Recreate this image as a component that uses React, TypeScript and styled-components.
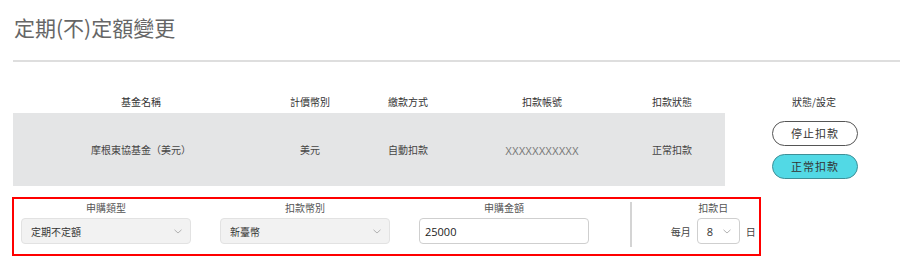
import * as React from 'react';
import styled, { createGlobalStyle } from 'styled-components';

const GlobalStyle = createGlobalStyle`
  body {
    margin: 0;
    background: #fff;
    font-family: "Noto Sans CJK TC", "Noto Sans", sans-serif;
  }
`;

const Page = styled.div`
  width: 887px;
  padding: 12px 11px 0 13px;
`;

const Title = styled.h1`
  margin: 0 0 0 1px;
  font-size: 21px;
  line-height: 30px;
  font-weight: 400;
  color: #666;
`;

const Rule = styled.hr`
  margin: 18px 0 0;
  border: 0;
  height: 2px;
  background: #dedede;
`;

const Table = styled.div`
  display: grid;
  grid-template-columns: 256px 82px 114px 154px 106px 178px;
  margin-top: 28px;
`;

const HeadCell = styled.div`
  height: 23px;
  display: flex;
  align-items: center;
  justify-content: center;
  font-size: 10px;
  color: #333;
`;

const Cell = styled.div<{ $mono?: boolean }>`
  box-sizing: border-box;
  height: 73px;
  display: flex;
  align-items: center;
  justify-content: center;
  background: #e4e5e6;
  font-size: 10px;
  color: ${(p) => (p.$mono ? '#777' : '#444')};
  font-family: ${(p) =>
    p.$mono ? '"Liberation Sans", sans-serif' : '"Noto Sans CJK TC", sans-serif'};
  padding-top: ${(p) => (p.$mono ? '4px' : '0')};
`;

const ActionCell = styled.div`
  height: 73px;
  display: flex;
  flex-direction: column;
  align-items: center;
  justify-content: center;
  gap: 8px;
  padding-left: 2px;
`;

const PillButton = styled.button<{ $active?: boolean }>`
  width: 86px;
  height: 25px;
  border-radius: 13px;
  border: 1.5px solid ${(p) => (p.$active ? '#3f8f97' : '#555')};
  background: ${(p) => (p.$active ? '#52d9e5' : '#fff')};
  color: #333;
  font-family: "Noto Sans CJK TC", sans-serif;
  font-size: 11px;
  letter-spacing: 1px;
  padding: 0;
`;

const FormBox = styled.div`
  display: flex;
  width: 738px;
  margin: 11px 0 0 -1px;
  border: 2px solid #ff0000;
  padding: 2px 0 10px 7px;
`;

const Field = styled.div`
  display: flex;
  flex-direction: column;
  align-items: center;
  width: 170px;
  gap: 3px;
  & + & {
    margin-left: 29px;
  }
`;

const Label = styled.div`
  font-size: 10px;
  line-height: 14px;
  color: #555;
`;

const SelectBox = styled.div<{ $plain?: boolean; $w?: number }>`
  box-sizing: border-box;
  width: ${(p) => (p.$w ? `${p.$w}px` : '100%')};
  height: 26px;
  display: flex;
  align-items: center;
  justify-content: space-between;
  padding: 0 8px 0 9px;
  border: 1px solid ${(p) => (p.$plain ? '#cfcfcf' : '#e2e2e2')};
  border-radius: 4px;
  background: ${(p) => (p.$plain ? '#fff' : '#f2f2f2')};
  font-size: 10px;
  color: #333;
`;

const InputBox = styled.div`
  box-sizing: border-box;
  width: 100%;
  height: 26px;
  display: flex;
  align-items: center;
  padding: 0 5px;
  border: 1.5px solid #cfcfcf;
  border-radius: 4px;
  font-family: "Open Sans", sans-serif;
  font-size: 11px;
  color: #222;
`;

const Divider = styled.div`
  width: 1.5px;
  margin: 1px 0 -3px 41px;
  background: #d4d4d4;
`;

const DayField = styled.div`
  flex: 1;
  display: flex;
  flex-direction: column;
  align-items: center;
  gap: 3px;
  padding-left: 36px;
`;

const DayRow = styled.div`
  display: flex;
  align-items: center;
  gap: 6px;
  font-size: 10px;
  color: #444;
`;

const Num = styled.span`
  font-family: "Open Sans", sans-serif;
  font-size: 11px;
`;

const Chevron = () => (
  <svg width="8" height="5" viewBox="0 0 8 5">
    <path d="M0.5 0.8 L4 4 L7.5 0.8" fill="none" stroke="#aaa" strokeWidth="0.9" />
  </svg>
);

const heads = ['基金名稱', '計價幣別', '繳款方式', '扣款帳號', '扣款狀態', '狀態/設定'];

export default function App() {
  return (
    <Page>
      <GlobalStyle />
      <Title>定期(不)定額變更</Title>
      <Rule />
      <Table>
        {heads.map((h) => (
          <HeadCell key={h}>{h}</HeadCell>
        ))}
        <Cell>摩根東協基金（美元）</Cell>
        <Cell>美元</Cell>
        <Cell>自動扣款</Cell>
        <Cell $mono>XXXXXXXXXXX</Cell>
        <Cell>正常扣款</Cell>
        <ActionCell>
          <PillButton>停止扣款</PillButton>
          <PillButton $active>正常扣款</PillButton>
        </ActionCell>
      </Table>
      <FormBox>
        <Field>
          <Label>申購類型</Label>
          <SelectBox>
            定期不定額
            <Chevron />
          </SelectBox>
        </Field>
        <Field>
          <Label>扣款幣別</Label>
          <SelectBox>
            新臺幣
            <Chevron />
          </SelectBox>
        </Field>
        <Field>
          <Label>申購金額</Label>
          <InputBox>25000</InputBox>
        </Field>
        <Divider />
        <DayField>
          <Label>扣款日</Label>
          <DayRow>
            每月
            <SelectBox $plain $w={43}>
              <Num>8</Num>
              <Chevron />
            </SelectBox>
            日
          </DayRow>
        </DayField>
      </FormBox>
    </Page>
  );
}
